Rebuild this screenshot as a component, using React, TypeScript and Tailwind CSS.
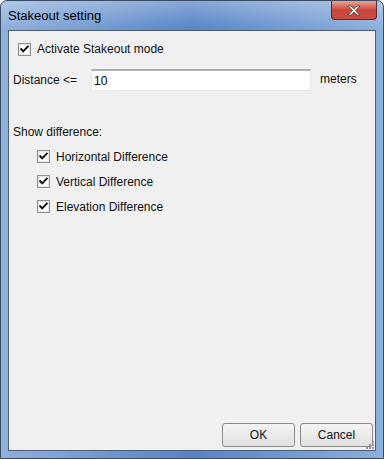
import React from "react";

const font = { fontFamily: '"Liberation Sans", Arial, sans-serif' };

function Check({ checked = true }: { checked?: boolean }) {
  return (
    <svg width="13" height="13" viewBox="0 0 13 13" className="shrink-0">
      <rect x="0.5" y="0.5" width="12" height="12" fill="#ffffff" stroke="#8f8f8f" />
      <rect x="1.5" y="1.5" width="10" height="10" fill="none" stroke="#e6e6e6" />
      {checked && (
        <path d="M3.2 6.2 L5.2 8.4 L9.8 3.6" fill="none" stroke="#111111" strokeWidth="2" strokeLinecap="square" />
      )}
    </svg>
  );
}

function CheckRow({ label }: { label: string }) {
  return (
    <div className="flex items-center gap-[6px] h-[25px]">
      <Check />
      <span className="text-[12px] text-[#111]">{label}</span>
    </div>
  );
}

function Button({ label }: { label: string }) {
  return (
    <button className="w-[73px] h-[24px] rounded-[3px] border border-[#8a8a8a] bg-gradient-to-b from-[#f4f4f4] to-[#e2e2e2] text-[12px] text-[#111]">
      {label}
    </button>
  );
}

export default function App() {
  return (
    <div style={font} className="w-[384px] h-[459px] bg-white">
      <div className="relative w-[384px] h-[459px] flex flex-col rounded-t-[7px] border border-[#3a4a62] bg-gradient-to-r from-[#8fb0dc] via-[#5483c6] to-[#8db0dc] overflow-hidden">
        <div className="h-[29px] shrink-0 flex items-start justify-between pl-[7px] bg-gradient-to-b from-[#ffffff]/30 to-transparent">
          <span className="mt-[5px] text-[13px] text-black">Stakeout setting</span>
          <div className="mr-[6px] w-[46px] h-[19px] rounded-b-[4px] border border-t-0 border-[#5c2a26] bg-gradient-to-b from-[#e7a497] via-[#c9463a] to-[#c64d3f] flex items-center justify-center">
            <svg width="14" height="11" viewBox="0 0 14 11">
              <path d="M1 1 L4 1 L7 4 L10 1 L13 1 L8.5 5.5 L13 10 L10 10 L7 7 L4 10 L1 10 L5.5 5.5 Z" fill="#ffffff" stroke="#5a3030" strokeWidth="0.8" />
            </svg>
          </div>
        </div>
        <div className="flex-1 mx-[7px] mb-[7px] border border-[#4e5d74] bg-[#f0f0f0] flex flex-col relative">
          <div className="flex items-center gap-[6px] mt-[10px] ml-[9px] h-[16px]">
            <Check />
            <span className="text-[12px] text-[#111]">Activate Stakeout mode</span>
          </div>
          <div className="flex items-center mt-[12px] ml-[4px] h-[22px]">
            <span className="w-[78px] text-[12px] text-[#111]">Distance &lt;=</span>
            <div className="w-[220px] h-[22px] bg-white border border-[#e3e9ef] border-t-[#abadb3] border-t-2 flex items-center pl-[2px] text-[12px] text-black">
              10
            </div>
            <span className="ml-[9px] -mt-[3px] text-[12px] text-[#111]">meters</span>
          </div>
          <div className="mt-[32px] ml-[4px] text-[12px] text-[#111]">Show difference:</div>
          <div className="mt-[3px] ml-[28px] flex flex-col">
            <CheckRow label="Horizontal Difference" />
            <CheckRow label="Vertical Difference" />
            <CheckRow label="Elevation Difference" />
          </div>
          <div className="flex-1" />
          <div className="flex justify-end gap-[5px] mr-[2px] mb-[3px]">
            <Button label="OK" />
            <Button label="Cancel" />
          </div>
          <svg width="11" height="11" viewBox="0 0 11 11" className="absolute right-0 bottom-0">
            <g fill="#9a9a9a">
              <rect x="8" y="2" width="2" height="2" />
              <rect x="5" y="5" width="2" height="2" />
              <rect x="8" y="5" width="2" height="2" />
              <rect x="2" y="8" width="2" height="2" />
              <rect x="5" y="8" width="2" height="2" />
              <rect x="8" y="8" width="2" height="2" />
            </g>
          </svg>
        </div>
      </div>
    </div>
  );
}
